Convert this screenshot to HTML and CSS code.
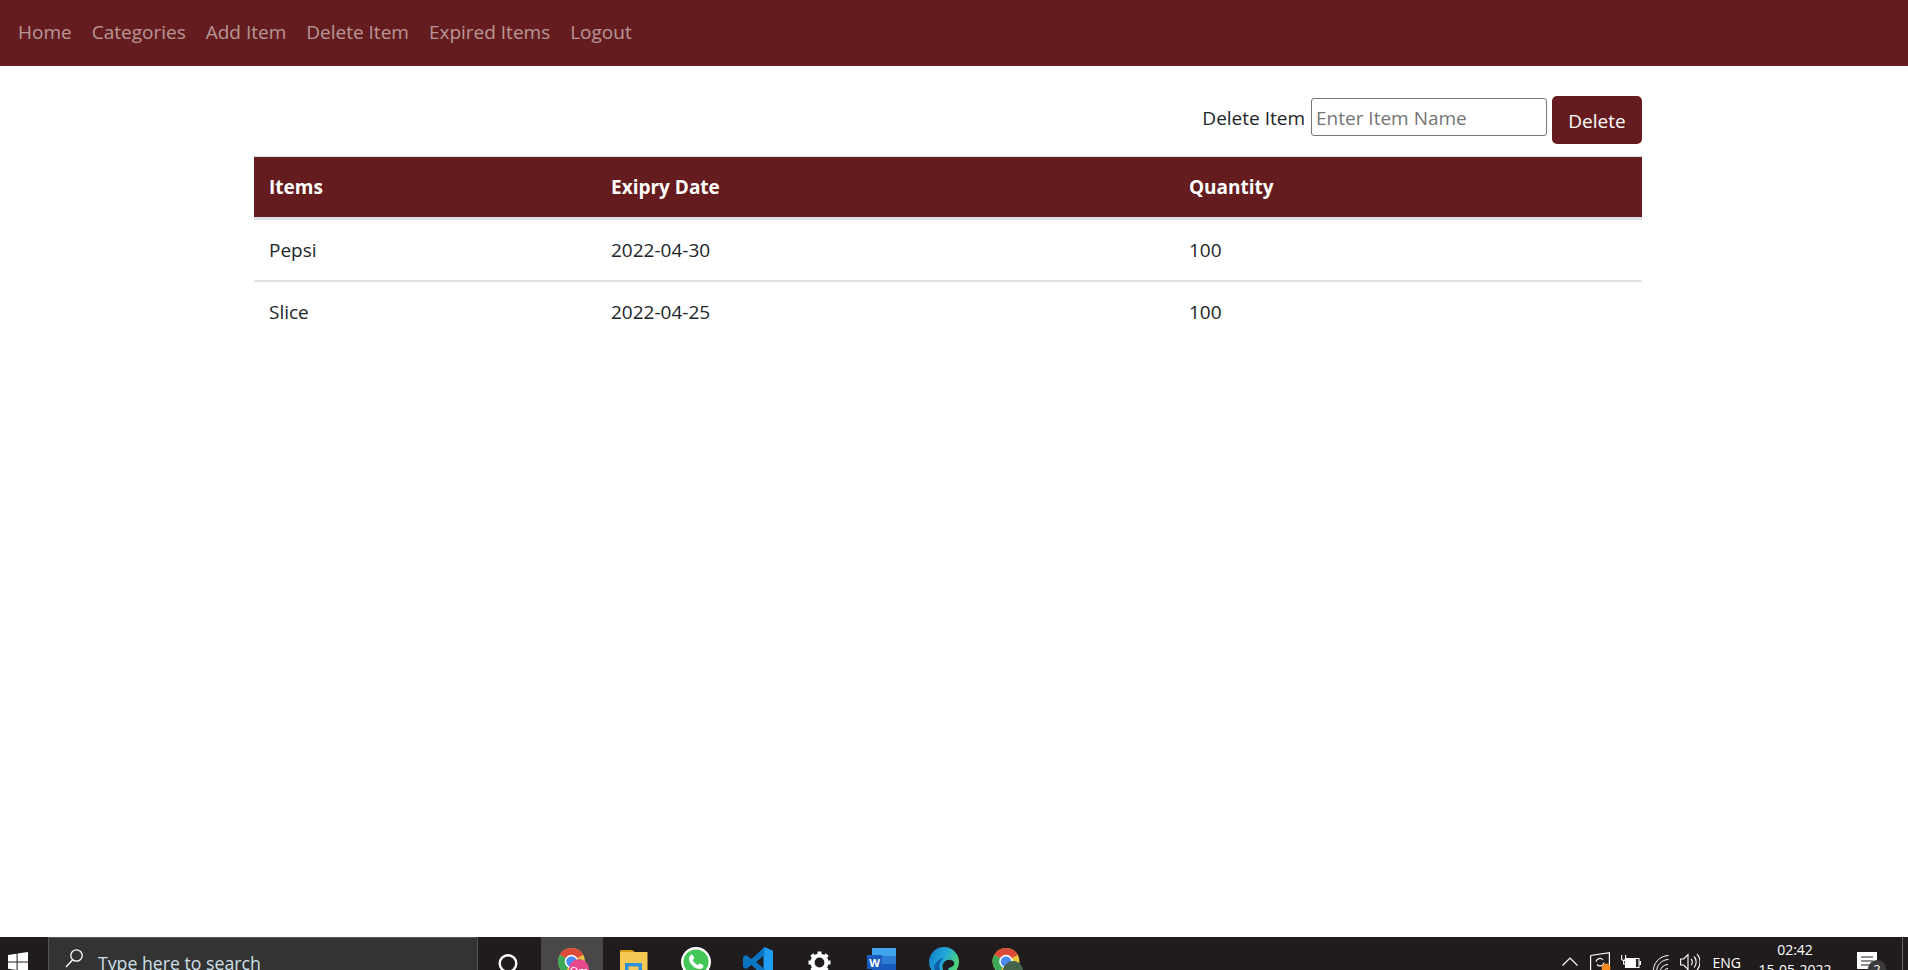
FILE: index.html
```html
<!DOCTYPE html>
<html>
<head>
    <title>Delete Item</title>
    <link rel="stylesheet" href="styles.css">
</head>
<body>
    <nav class="navbar">
        <a href="#">Home</a>
        <a href="#">Categories</a>
        <a href="#">Add Item</a>
        <a href="#">Delete Item</a>
        <a href="#">Expired Items</a>
        <a href="#">Logout</a>
    </nav>

    <main class="content">
        <form class="delete-form">
            <label for="item-name">Delete Item</label>
            <input type="text" id="item-name" placeholder="Enter Item Name">
            <button type="button" class="delete-btn">Delete</button>
        </form>

        <table class="items-table">
            <thead>
                <tr>
                    <th class="col-items">Items</th>
                    <th class="col-date">Exipry Date</th>
                    <th>Quantity</th>
                </tr>
            </thead>
            <tbody>
                <tr>
                    <td>Pepsi</td>
                    <td>2022-04-30</td>
                    <td>100</td>
                </tr>
                <tr>
                    <td>Slice</td>
                    <td>2022-04-25</td>
                    <td>100</td>
                </tr>
            </tbody>
        </table>
    </main>

    <!-- Windows taskbar, cut off by the bottom of the window -->
    <footer class="taskbar">
        <div class="start">
            <svg width="20" height="20" viewBox="0 0 20 20"><path fill="#fff" d="M0 3l8.600-1.200v7.600H0zM9.600 1.600L20 0v9.400H9.600zM0 10.400h8.600V18L0 16.800zM9.600 10.400H20V20L9.600 18.400z"/></svg>
        </div>
        <div class="search">
            <svg width="20" height="22" viewBox="0 0 20 22"><circle cx="12.500" cy="7.500" r="5.700" fill="none" stroke="#fff" stroke-width="1.300"/><path d="M8.500 12L2 19" stroke="#fff" stroke-width="1.400"/></svg>
            <span>Type here to search</span>
        </div>
        <div class="tile tile-first">
            <svg class="tile-icon" viewBox="0 0 63 33"><circle cx="30" cy="26.500" r="8.300" fill="none" stroke="#fff" stroke-width="2.400"/></svg>
        </div>
        <div class="tile active">
            <svg class="tile-icon" viewBox="0 0 62 33">
                <circle cx="30.500" cy="24.500" r="13.500" fill="#e8c53f"/>
                <path d="M30.500 24.500L18.800 17.750A13.500 13.500 0 0 1 42.200 17.750z" fill="#dc4a3a"/>
                <path d="M30.500 24.500L18.800 17.750A13.500 13.500 0 0 0 24 36.300z" fill="#3fa85a"/>
                <circle cx="30.500" cy="24.500" r="6.800" fill="#fff"/>
                <circle cx="30.500" cy="24.500" r="5.200" fill="#4c8bf5"/>
                <circle cx="38" cy="32" r="10" fill="#e8488c"/>
                <text x="38" y="38" class="badge-text">Om</text>
            </svg>
        </div>
        <div class="tile">
            <svg class="tile-icon" viewBox="0 0 62 33">
                <path fill="#d69e14" d="M17 15v-1a1 1 0 0 1 1-1h11l3 2z"/>
                <path fill="#f6c955" d="M17 15h27.500v18H17z"/>
                <path fill="#2f8fd8" d="M22 26h17v7H22z"/>
                <path fill="#f6c955" d="M25.500 29.500h10v4h-10z"/>
            </svg>
        </div>
        <div class="tile">
            <svg class="tile-icon" viewBox="0 0 62 33">
                <circle cx="31" cy="25" r="15" fill="#fff"/>
                <circle cx="31" cy="25" r="12.600" fill="#45c758"/>
                <path fill="#fff" d="M26.800 17.500c-1 0-2.800 1.700-2.800 4 0 5 5.500 10.400 10.500 10.400 2.500 0 4-1.700 4-3 0-.7-3-2.400-3.700-2.400s-1.200 1.500-1.900 1.500c-1.400 0-5-3.300-5-4.900 0-.7 1.400-1.300 1.400-2 0-.8-1.800-3.600-2.500-3.600z"/>
            </svg>
        </div>
        <div class="tile">
            <svg class="tile-icon" viewBox="0 0 62 33">
                <path fill="#0a76c2" fill-rule="evenodd" d="M37.500 10L46 14v22l-8.500 4-13-12-5.500 4-3-2V20l3-2 5.500 4zM37.500 18l-8.500 7 8.500 7z"/>
                <path fill="#1f9cf0" d="M37.500 10L46 14v22l-8.500 4v-8l-1-0.500v-13l1-.5z"/>
            </svg>
        </div>
        <div class="tile">
            <svg class="tile-icon" viewBox="0 0 62 33">
                <circle cx="30.500" cy="25.500" r="7" fill="none" stroke="#fff" stroke-width="4.200"/>
                <path stroke="#fff" stroke-width="4" d="M30.500 14.500v4M30.500 32.500v4M19.500 25.500h4M37.500 25.500h4M22.700 17.700l2.800 2.800M35.500 30.500l2.800 2.800M38.300 17.700l-2.800 2.800M25.500 30.500l-2.800 2.800"/>
            </svg>
        </div>
        <div class="tile">
            <svg class="tile-icon" viewBox="0 0 62 33">
                <path fill="#41a5ee" d="M21 11h24v8H21z"/>
                <path fill="#2b7cd3" d="M21 19h24v8H21z"/>
                <path fill="#185abd" d="M21 27h24v8H21z"/>
                <path fill="#1a5cc0" d="M16 18h15v14H16z"/>
                <text x="23.500" y="29.500" class="word-text">W</text>
            </svg>
        </div>
        <div class="tile">
            <svg class="tile-icon" viewBox="0 0 62 33">
                <defs>
                    <linearGradient id="edge-fill" x1="0" y1="0" x2="1" y2="0.400">
                        <stop offset="0" stop-color="#1277c8"/>
                        <stop offset="0.550" stop-color="#21a8d8"/>
                        <stop offset="1" stop-color="#4fd27a"/>
                    </linearGradient>
                </defs>
                <circle cx="31" cy="25" r="15" fill="url(#edge-fill)"/>
                <path fill="#201c1d" d="M30 33c-2-6 2-11 8-10 3 .5 4 3 2.500 5.500-1.500 2-4 1.500-5 3-.5 1 0 2.500 1.500 4.500h-6z"/>
                <path fill="#0d5ca8" d="M27 33c-2-6 1-11 5-12-5 0-10 4-11 10l1 2z"/>
            </svg>
        </div>
        <div class="tile">
            <svg class="tile-icon" viewBox="0 0 62 33">
                <circle cx="31" cy="24.500" r="13.500" fill="#e8c53f"/>
                <path d="M31 24.500L19.300 17.750A13.500 13.500 0 0 1 42.700 17.750z" fill="#dc4a3a"/>
                <path d="M31 24.500L19.300 17.750A13.500 13.500 0 0 0 24.500 36.300z" fill="#3fa85a"/>
                <circle cx="31" cy="24.500" r="6.800" fill="#fff"/>
                <circle cx="31" cy="24.500" r="5.200" fill="#4c8bf5"/>
                <circle cx="38" cy="34" r="10" fill="#44634b"/>
            </svg>
        </div>

        <div class="tray">
            <svg class="chevron" width="16" height="9" viewBox="0 0 16 9"><path d="M.500 8.500L8 1l7.500 7.500" fill="none" stroke="#fff" stroke-width="1.200"/></svg>
            <svg class="tray-net" width="22" height="22" viewBox="0 0 22 22">
                <path d="M.600 3.500L19.400.700V15H18M.600 3.500v15H11" fill="none" stroke="#fff" stroke-width="1.200"/>
                <path d="M6 9.500a4 4 0 0 1 7-1.500M14 10.500a4 4 0 0 1-7 2" fill="none" stroke="#fff" stroke-width="1.200"/>
                <circle cx="16" cy="16" r="4.500" fill="#f78b1e"/>
            </svg>
            <svg class="tray-batt" width="20" height="13" viewBox="0 0 20 13">
                <path d="M4.500 3.500h13.500v9H4.500z" fill="none" stroke="#fff" stroke-width="1.100"/>
                <path d="M5 4h10v8H5zM18.500 6H20v4h-1.500z" fill="#fff"/>
                <path d="M.600 0v3.500a2 2 0 0 0 4 0V0" fill="none" stroke="#fff" stroke-width="1.200"/>
                <path d="M2.600 5.500V9H5" fill="none" stroke="#fff" stroke-width="1.100"/>
            </svg>
            <svg class="tray-wifi" width="16" height="18" viewBox="0 0 16 18">
                <path d="M.500 18A15.500 15.500 0 0 1 15.500.500M3.700 18A12 12 0 0 1 15.500 4.500M7 18a8 8 0 0 1 8-8.500M10.500 18a4.500 4.500 0 0 1 4.500-4.500" fill="none" stroke="#fff" stroke-width="1"/>
            </svg>
            <svg class="tray-sound" width="20" height="18" viewBox="0 0 20 18">
                <path d="M.600 6h3l4.400-4.500v15L3.600 12h-3z" fill="none" stroke="#fff" stroke-width="1.100"/>
                <path d="M11 6a4 4 0 0 1 0 6M14 3.500a8 8 0 0 1 0 11M17 1a12 12 0 0 1 0 16" fill="none" stroke="#fff" stroke-width="1.100"/>
            </svg>
            <span class="lang">ENG</span>
            <div class="clock">
                <span>02:42</span>
                <span>15-05-2022</span>
            </div>
            <svg class="notify" width="34" height="26" viewBox="0 0 34 26">
                <path fill="#fff" d="M3 0h20v17H3z"/>
                <path stroke="#222" stroke-width="1.200" d="M7 5h12M7 9h12M7 13h8"/>
                <circle cx="23" cy="17" r="9" fill="#3a3a3a"/>
                <text x="23" y="22" class="notify-text">2</text>
            </svg>
            <div class="show-desktop"></div>
        </div>
    </footer>
</body>
</html>
```

FILE: styles.css
```css
* {
    box-sizing: border-box;
}

html, body {
    height: 970px;
    overflow: hidden;
}

body {
    margin: 0;
    display: flex;
    flex-direction: column;
    background: #fff;
    color: #212529;
    font-family: "Open Sans", "Noto Sans", sans-serif;
    font-size: 19px;
}

.navbar {
    height: 66px;
    padding: 0 8px 2px;
    display: flex;
    align-items: center;
    background: #651c1e;
}

.navbar a {
    padding: 0 10px;
    color: rgba(255, 255, 255, 0.55);
    text-decoration: none;
}

.content {
    flex: 1;
    padding: 30px 266px 0 254px;
}

.delete-form {
    height: 60px;
    display: flex;
    justify-content: flex-end;
    align-items: flex-start;
}

.delete-form label {
    margin: 5px 6px 0 0;
    line-height: 34px;
}

.delete-form input {
    width: 236px;
    height: 38px;
    margin: 2px 5px 0 0;
    padding: 2px 4px 0;
    border: 1px solid #767676;
    border-radius: 3px;
    font: inherit;
    color: #212529;
}

.delete-form input::placeholder {
    color: #757575;
}

.delete-btn {
    width: 90px;
    height: 48px;
    padding: 2px 0 0;
    border: none;
    border-radius: 5px;
    background: #651c1e;
    color: #fff;
    font: inherit;
}

.items-table {
    width: 100%;
    border-collapse: collapse;
    border-top: 1px solid #dee2e6;
}

.items-table th,
.items-table td {
    padding: 0 15px;
    text-align: left;
    line-height: 30px;
}

.items-table th {
    height: 62px;
    background: #651c1e;
    color: #fff;
    font-weight: 700;
    border-bottom: 3px solid #dee2e6;
}

.items-table td {
    height: 62px;
    border-bottom: 2px solid #dee2e6;
}

.items-table tbody tr:last-child td {
    border-bottom: none;
}

.col-items {
    width: 342px;
}

.col-date {
    width: 578px;
}

/* taskbar */
.taskbar {
    height: 33px;
    display: flex;
    background: #201c1d;
    color: #fff;
    overflow: hidden;
}

.start {
    width: 48px;
    padding: 15px 0 0 8px;
}

.search {
    width: 430px;
    padding: 10px 0 0 15px;
    display: flex;
    align-items: flex-start;
    gap: 14px;
    background: #333;
    border: 1px solid #555;
    border-bottom: none;
    font-size: 17.700px;
    color: #cfe0ea;
}

.search span {
    margin-top: 1px;
    line-height: 28px;
}

.tile {
    width: 62px;
    flex-shrink: 0;
}

.tile-first {
    width: 63px;
}

.tile.active {
    background: #4a4748;
}

.tile-icon {
    display: block;
    width: 100%;
    height: 33px;
}

.badge-text {
    font-size: 11px;
    fill: #fff;
    text-anchor: middle;
}

.word-text {
    font-size: 11px;
    font-weight: 700;
    fill: #fff;
    text-anchor: middle;
}

.notify-text {
    font-size: 13px;
    fill: #fff;
    text-anchor: middle;
}

.tray {
    flex: 1;
    display: flex;
    justify-content: flex-end;
    align-items: flex-start;
    padding-right: 5px;
}

.chevron {
    margin: 20px 12px 0 0;
}

.tray-net {
    margin: 15px 9px 0 0;
}

.tray-batt {
    margin: 18px 12px 0 0;
}

.tray-wifi {
    margin: 18px 11px 0 0;
}

.tray-sound {
    margin: 16px 13px 0 0;
}

.lang {
    margin-top: 16px;
    font-size: 14px;
    line-height: 20px;
}

.clock {
    width: 92px;
    margin: 3px 0 0 8px;
    display: flex;
    flex-direction: column;
    align-items: center;
    font-size: 14px;
    line-height: 20px;
}

.notify {
    margin: 15px 0 0 13px;
}

.show-desktop {
    width: 1px;
    height: 33px;
    margin-left: 14px;
    background: #666;
}
```
